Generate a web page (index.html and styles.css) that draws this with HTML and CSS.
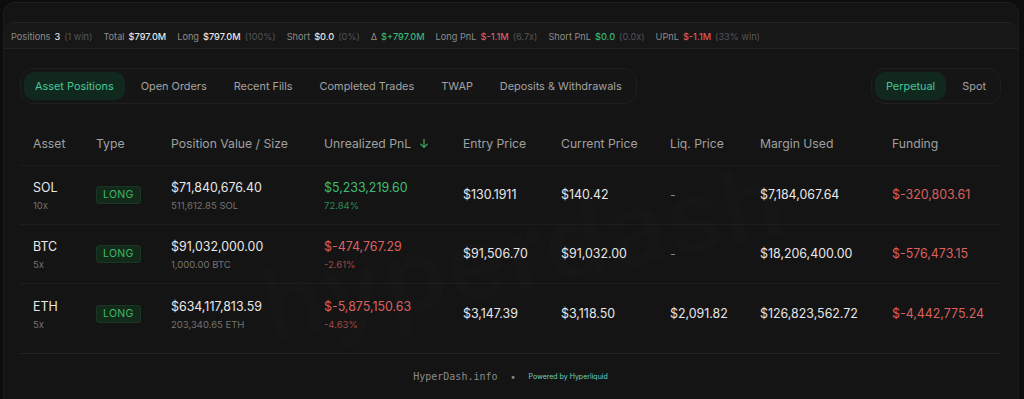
FILE: index.html
```html
<!DOCTYPE html>
<html lang="en">
<head>
<meta charset="utf-8">
<title>HyperDash – Positions</title>
<link rel="stylesheet" href="styles.css">
</head>
<body>
<div class="app">
  <div class="stats">
    <span class="stat"><span class="lbl">Positions</span><b>3</b><i>(1 win)</i></span>
    <span class="stat"><span class="lbl">Total</span><b>$797.0M</b></span>
    <span class="stat"><span class="lbl">Long</span><b>$797.0M</b><i>(100%)</i></span>
    <span class="stat"><span class="lbl">Short</span><b>$0.0</b><i>(0%)</i></span>
    <span class="stat"><span class="lbl">Δ</span><b class="g">$+797.0M</b></span>
    <span class="stat"><span class="lbl">Long PnL</span><b class="r">$-1.1M</b><i>(6.7x)</i></span>
    <span class="stat"><span class="lbl">Short PnL</span><b class="g">$0.0</b><i>(0.0x)</i></span>
    <span class="stat"><span class="lbl">UPnL</span><b class="r">$-1.1M</b><i>(33% win)</i></span>
  </div>

  <div class="panel">
    <div class="watermark">hyperdash</div>
    <div class="toolbar">
      <div class="seg">
        <span class="tab active">Asset Positions</span>
        <span class="tab">Open Orders</span>
        <span class="tab">Recent Fills</span>
        <span class="tab">Completed Trades</span>
        <span class="tab">TWAP</span>
        <span class="tab">Deposits &amp; Withdrawals</span>
      </div>
      <div class="seg">
        <span class="tab active">Perpetual</span>
        <span class="tab">Spot</span>
      </div>
    </div>

    <div class="table">
      <div class="row head">
        <span>Asset</span>
        <span>Type</span>
        <span>Position Value / Size</span>
        <span class="sorted">Unrealized PnL <span class="arrow">↓</span></span>
        <span>Entry Price</span>
        <span>Current Price</span>
        <span>Liq. Price</span>
        <span>Margin Used</span>
        <span>Funding</span>
      </div>

      <div class="row">
        <div class="cell two"><span class="main">SOL</span><span class="sub">10x</span></div>
        <div class="cell"><span class="badge">LONG</span></div>
        <div class="cell two"><span class="main">$71,840,676.40</span><span class="sub">511,612.85 SOL</span></div>
        <div class="cell two"><span class="main g">$5,233,219.60</span><span class="sub g2">72.84%</span></div>
        <div class="cell"><span class="main">$130.1911</span></div>
        <div class="cell"><span class="main">$140.42</span></div>
        <div class="cell"><span class="main dim">-</span></div>
        <div class="cell"><span class="main">$7,184,067.64</span></div>
        <div class="cell"><span class="main r">$-320,803.61</span></div>
      </div>

      <div class="row">
        <div class="cell two"><span class="main">BTC</span><span class="sub">5x</span></div>
        <div class="cell"><span class="badge">LONG</span></div>
        <div class="cell two"><span class="main">$91,032,000.00</span><span class="sub">1,000.00 BTC</span></div>
        <div class="cell two"><span class="main r">$-474,767.29</span><span class="sub r2">-2.61%</span></div>
        <div class="cell"><span class="main">$91,506.70</span></div>
        <div class="cell"><span class="main">$91,032.00</span></div>
        <div class="cell"><span class="main dim">-</span></div>
        <div class="cell"><span class="main">$18,206,400.00</span></div>
        <div class="cell"><span class="main r">$-576,473.15</span></div>
      </div>

      <div class="row last">
        <div class="cell two"><span class="main">ETH</span><span class="sub">5x</span></div>
        <div class="cell"><span class="badge">LONG</span></div>
        <div class="cell two"><span class="main">$634,117,813.59</span><span class="sub">203,340.65 ETH</span></div>
        <div class="cell two"><span class="main r">$-5,875,150.63</span><span class="sub r2">-4.63%</span></div>
        <div class="cell"><span class="main">$3,147.39</span></div>
        <div class="cell"><span class="main">$3,118.50</span></div>
        <div class="cell"><span class="main">$2,091.82</span></div>
        <div class="cell"><span class="main">$126,823,562.72</span></div>
        <div class="cell"><span class="main r">$-4,442,775.24</span></div>
      </div>
    </div>

    <div class="footer">
      <span class="site">HyperDash.info</span>
      <span class="dot">•</span>
      <span class="powered">Powered by Hyperliquid</span>
    </div>
  </div>
</div>
</body>
</html>
```

FILE: styles.css
```css
* { box-sizing: border-box; }

html, body {
  margin: 0;
  padding: 0;
  height: 399px;
  overflow: hidden;
}

body {
  background: #0d0d0d;
  font-family: Inter, "Noto Sans", "Liberation Sans", sans-serif;
  color: #e6e6e6;
}

.app {
  width: 1016px;
  height: 397px;
  margin: 2px 0 0 3px;
  background: #141414;
  border: 1px solid #1d1d1d;
  border-bottom: none;
  border-radius: 12px 12px 0 0;
  padding-top: 19px;
  overflow: hidden;
}

/* stats bar */
.stats {
  height: 27px;
  background: #171717;
  border-top: 1px solid #222;
  border-bottom: 1px solid #222;
  border-radius: 10px 10px 0 0;
  display: flex;
  align-items: center;
  gap: 11px;
  padding-left: 7px;
  padding-top: 1px;
  font-size: 9.2px;
  white-space: nowrap;
}
.stat { display: flex; gap: 4px; align-items: baseline; }
.stat .lbl { color: #8c8c8c; }
.stat b { font-weight: 500; color: #e6e6e6; }
.stat i { font-style: normal; color: #555; }
.stat b.g { color: #38b577; }
.stat b.r { color: #dd5b5b; }

/* panel */
.panel {
  position: relative;
  padding: 19px 17px 0 16px;
}

.watermark {
  position: absolute;
  left: 272px;
  top: 196px;
  font-size: 100px;
  font-weight: 600;
  letter-spacing: 2px;
  color: rgba(255, 255, 255, 0.013);
  transform: rotate(-12deg);
  transform-origin: left bottom;
  pointer-events: none;
  white-space: nowrap;
}

.toolbar {
  display: flex;
  justify-content: space-between;
  align-items: center;
}

.seg {
  display: flex;
  gap: 5px;
  padding: 3px;
  border: 1px solid #1f1f1f;
  background: #151515;
  border-radius: 13px;
}

.tab {
  height: 28px;
  line-height: 28px;
  padding: 0 11px;
  font-size: 10.9px;
  color: #a3a3a3;
  border-radius: 10px;
  white-space: nowrap;
}
.tab.active {
  background: #10281e;
  color: #48c996;
}

/* table */
.table {
  margin-top: 17px;
  position: relative;
}

.row {
  display: grid;
  grid-template-columns: 63px 75px 153px 139px 98px 109px 90px 132px 1fr;
  align-items: center;
  padding-left: 13px;
  height: 59px;
  border-bottom: 1px solid #1d1d1d;
}
.row.head {
  height: 45px;
  font-size: 12.2px;
  color: #a0a0a0;
}
.row.last { border-bottom: none; }

.sorted { display: flex; align-items: center; gap: 8px; }
.arrow { color: #3fb884; font-size: 12px; }

.cell {
  display: flex;
  flex-direction: column;
  align-items: flex-start;
}
.cell.two { padding-top: 3px; }
.main {
  font-size: 12.4px;
  line-height: 16px;
  color: #e8e8e8;
  white-space: nowrap;
}
.sub {
  font-size: 9.5px;
  line-height: 14px;
  margin-top: 3px;
  color: #737373;
  white-space: nowrap;
}
.g { color: #3fbf72; }
.r { color: #dc6060; }
.g2 { color: #2e8c55; }
.r2 { color: #a34748; }
.dim { color: #8a8a8a; }

.badge {
  font-size: 10.5px;
  line-height: 16px;
  padding: 0 6px;
  border-radius: 3px;
  background: #132a1b;
  border: 1px solid #1a3624;
  color: #3cb867;
  letter-spacing: 0.3px;
}

/* footer */
.footer {
  margin-top: 10px;
  border-top: 1px solid #222;
  height: 45px;
  display: flex;
  justify-content: center;
  align-items: center;
  gap: 13px;
}
.site {
  font-family: "DejaVu Sans Mono", "Liberation Mono", monospace;
  font-size: 10px;
  color: #8a8a8a;
}
.dot { color: #8a8a8a; font-size: 9px; }
.powered {
  font-size: 7px;
  color: #6fd3c4;
}
```
